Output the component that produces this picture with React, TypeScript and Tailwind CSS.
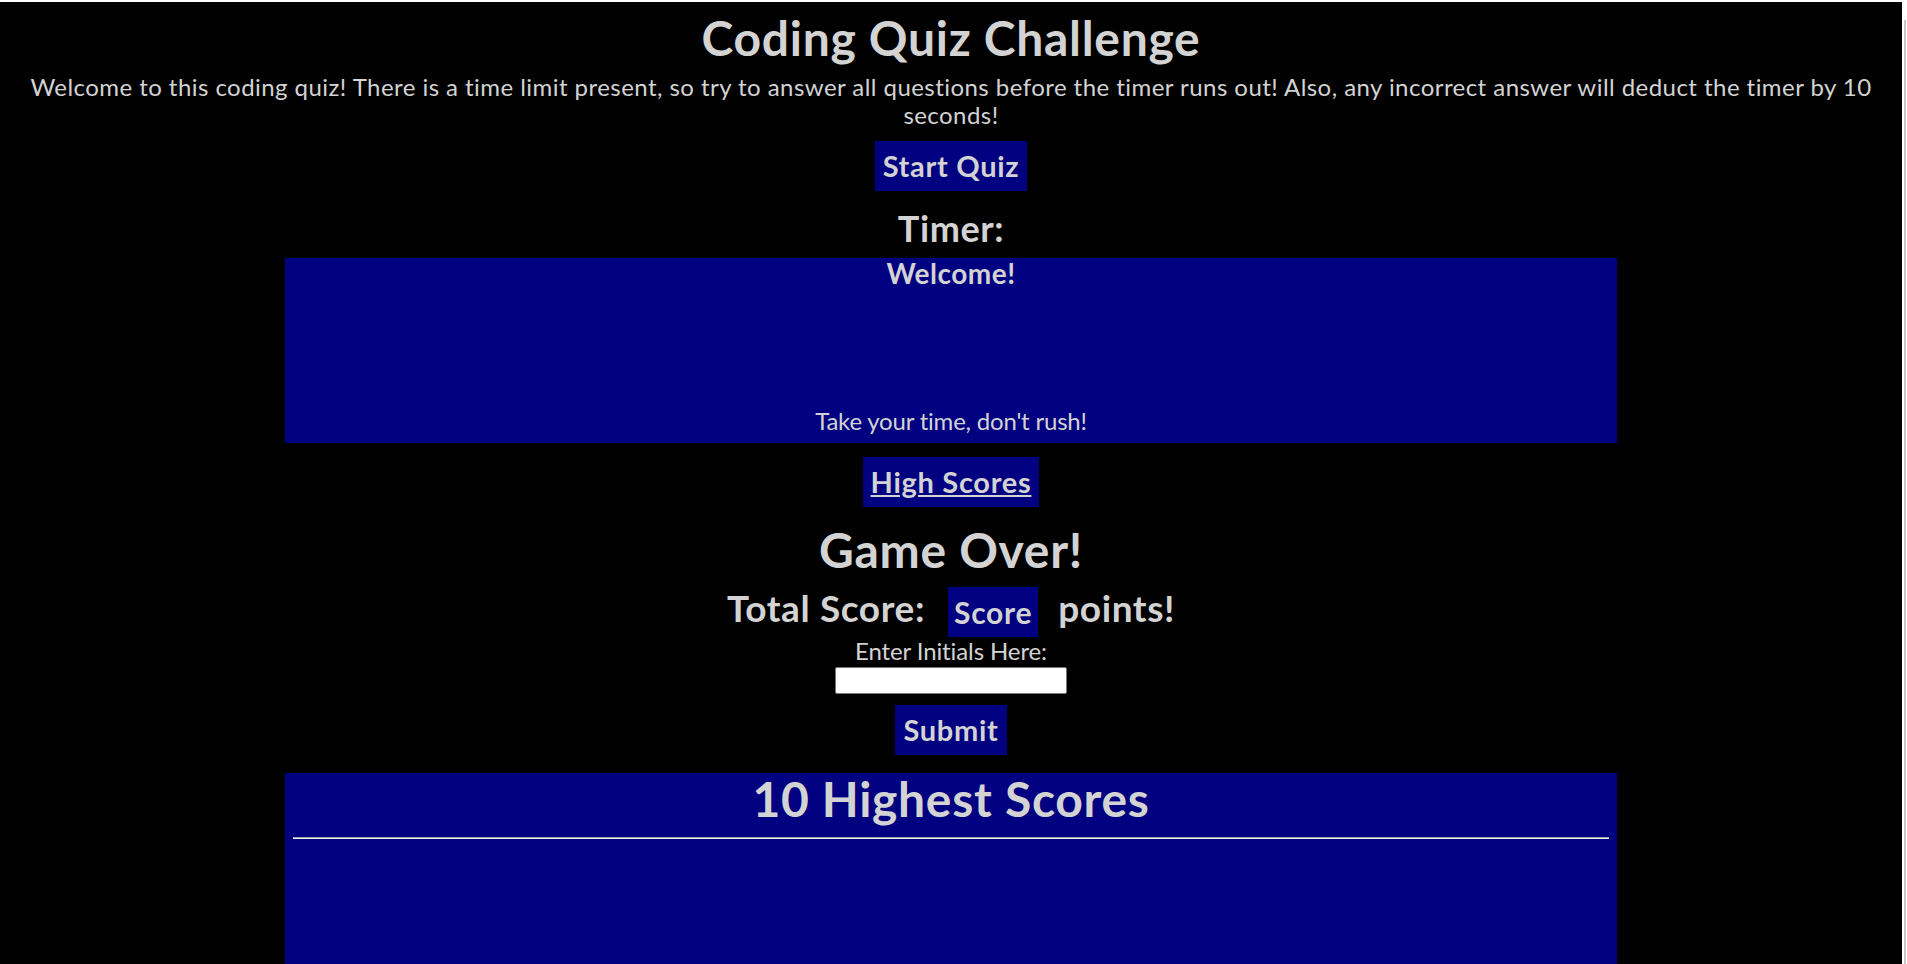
export default function App() {
  return (
    <div className="relative h-[964px] w-full overflow-hidden bg-white pt-[2px] pr-[5px]">
      <div className="absolute right-[1px] top-[20px] h-[944px] w-[2px] bg-[#c8c8c8]" />
      <div className="flex h-[962px] flex-col items-center overflow-hidden bg-black text-center font-['Lato',sans-serif] text-[#d3d3d3]">
        <h1 className="mt-[8px] shrink-0 text-[48px] font-bold leading-[56px] tracking-[0.7px]">Coding Quiz Challenge</h1>
        <p className="mt-[7px] shrink-0 px-[28px] text-[24px] leading-[28px] tracking-[0.45px]">
          Welcome to this coding quiz! There is a time limit present, so try to answer all questions before the timer runs out! Also, any incorrect answer will deduct the timer by 10 seconds!
        </p>
        <button className="mt-[12px] flex h-[50px] shrink-0 items-center bg-[#000080] px-[8px] text-[29px] font-bold leading-[32px] tracking-[0.7px] text-[#d3d3d3]">
          Start Quiz
        </button>
        <h2 className="mt-[17px] shrink-0 text-[36px] font-bold leading-[40px] tracking-[0.6px]">Timer:</h2>
        <div className="mt-[10px] flex h-[185px] w-[70%] shrink-0 flex-col items-center justify-between bg-[#000080]">
          <h3 className="text-[28px] font-bold leading-[30px] tracking-[0.5px]">Welcome!</h3>
          <p className="mb-[8px] text-[24px] leading-[28px] tracking-[-0.2px]">Take your time, don't rush!</p>
        </div>
        <a href="#" className="mt-[14px] flex h-[50px] shrink-0 items-center bg-[#000080] px-[8px] text-[29px] font-bold leading-[32px] tracking-[0.7px] text-[#d3d3d3] underline">
          High Scores
        </a>
        <h1 className="mt-[15px] shrink-0 text-[48px] font-bold leading-[56px] tracking-[0.7px]">Game Over!</h1>
        <div className="mt-[9px] flex shrink-0 items-start">
          <h2 className="mt-[1px] text-[37px] font-bold leading-[40px] tracking-[0.6px]">Total Score:</h2>
          <span className="ml-[23px] flex h-[50px] items-center bg-[#000080] px-[6px] text-[30px] font-bold leading-[32px] tracking-[0.7px]">Score</span>
          <h2 className="ml-[20px] mt-[1px] text-[37px] font-bold leading-[40px] tracking-[0.6px]">points!</h2>
        </div>
        <label className="shrink-0 text-[24px] leading-[28px] tracking-[-0.1px]">Enter Initials Here:</label>
        <input type="text" className="mt-[2px] h-[27px] w-[232px] shrink-0 rounded-[2px] border border-[#767676] bg-white" />
        <button className="mt-[11px] flex h-[50px] shrink-0 items-center bg-[#000080] px-[8px] text-[29px] font-bold leading-[32px] tracking-[0.7px] text-[#d3d3d3]">
          Submit
        </button>
        <div className="mt-[18px] flex h-[300px] w-[70%] shrink-0 flex-col bg-[#000080] px-[8px]">
          <h1 className="text-[48px] font-bold leading-[52px] tracking-[0.7px]">10 Highest Scores</h1>
          <hr className="mt-[12px] border-0 border-t border-b border-t-[#a0a0a0] border-b-[#f0f0f0]" />
        </div>
      </div>
    </div>
  );
}
